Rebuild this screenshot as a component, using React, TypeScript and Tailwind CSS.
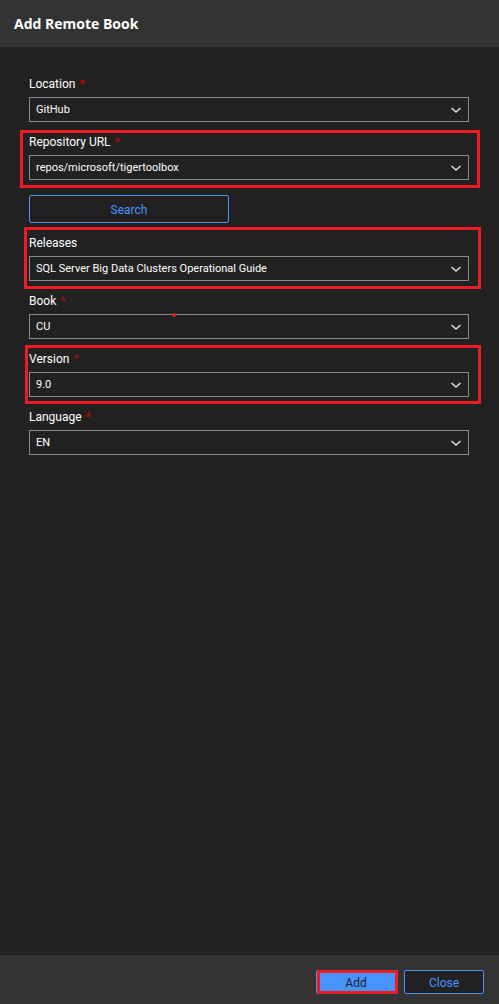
import { ReactNode } from "react";

type FieldProps = {
  id: string;
  label: string;
  options: string[];
  required?: boolean;
  starClass?: string;
  highlight?: string;
  children?: ReactNode;
};

function Field({ id, label, options, required, starClass = "text-[#d00000]", highlight, children }: FieldProps) {
  return (
    <div className="relative">
      <div className="flex h-[33px] items-center gap-1 pt-[6px]">
        <label htmlFor={id} className="text-[12px] leading-4 text-white">
          {label}
        </label>
        {required && (
          <span aria-hidden="true" className={`text-[13px] leading-4 ${starClass}`}>
            *
          </span>
        )}
      </div>
      <div className="relative">
        <select
          id={id}
          required={required}
          className="block h-[25px] w-full appearance-none rounded-none border border-[#8a8a8a] bg-[#212121] pt-px pr-6 pl-[6px] text-[11px] leading-4 text-white outline-none"
        >
          {options.map((option) => (
            <option key={option}>{option}</option>
          ))}
        </select>
        <svg
          viewBox="0 0 12 8"
          className="pointer-events-none absolute top-[9px] right-[7px] h-2 w-3"
          fill="none"
          stroke="#e0e0e0"
          strokeWidth="1.5"
          aria-hidden="true"
        >
          <path d="M1.5 2 6 6l4.5-4" />
        </svg>
        {children}
      </div>
      {highlight && (
        <div className={`pointer-events-none absolute border-3 border-[#ed1c24] ${highlight}`} />
      )}
    </div>
  );
}

export default function App() {
  return (
    <div className="flex min-h-screen flex-col bg-[#212121] font-['Roboto','Open_Sans',sans-serif] text-white">
      <header className="flex h-[47px] items-center bg-[#333333] px-[14px]">
        <h1 className="font-['Open_Sans','Noto_Sans',sans-serif] text-[14px] leading-5 font-bold">Add Remote Book</h1>
      </header>

      <main className="flex-1 pt-[17px] pr-[30px] pl-[29px]">
        <Field id="location" label="Location" options={["GitHub"]} required />
        <Field
          id="repository"
          label="Repository URL"
          options={["repos/microsoft/tigertoolbox"]}
          required
          starClass="text-[#b00d0d]"
          highlight="top-2 -right-[11px] -bottom-2 -left-[9px]"
        />
        <button
          type="button"
          className="mt-[15px] block h-7 w-[200px] rounded-[2px] border border-[#4894fe] pt-px text-[12px] leading-4 text-[#4894fe]"
        >
          Search
        </button>
        <Field
          id="releases"
          label="Releases"
          options={["SQL Server Big Data Clusters Operational Guide"]}
          highlight="top-1 -right-3 -bottom-2 -left-[5px]"
        />
        <Field id="book" label="Book" options={["CU"]} required starClass="text-[#901818]">
          <span className="absolute -top-px left-[143px] size-1 rounded-full bg-[#e02020]" />
        </Field>
        <Field
          id="version"
          label="Version"
          options={["9.0"]}
          required
          starClass="text-[#901818]"
          highlight="top-[6px] -right-3 -bottom-[7px] -left-1"
        />
        <Field id="language" label="Language" options={["EN"]} required />
      </main>

      <footer className="flex h-[49px] items-start justify-end gap-2 bg-[#333333] pt-[15px] pr-[15px]">
        <div className="relative">
          <button
            type="button"
            className="block h-6 w-20 rounded-[2px] bg-[#4894fe] pt-px text-[12px] leading-4 text-[#212121]"
          >
            Add
          </button>
          <div className="pointer-events-none absolute inset-y-0 -right-[2px] left-px border-3 border-[#ed1c24]" />
        </div>
        <button
          type="button"
          className="block h-6 w-20 rounded-[2px] border border-[#4894fe] bg-[#212121] pt-px text-[12px] leading-4 text-[#4894fe]"
        >
          Close
        </button>
      </footer>
    </div>
  );
}
